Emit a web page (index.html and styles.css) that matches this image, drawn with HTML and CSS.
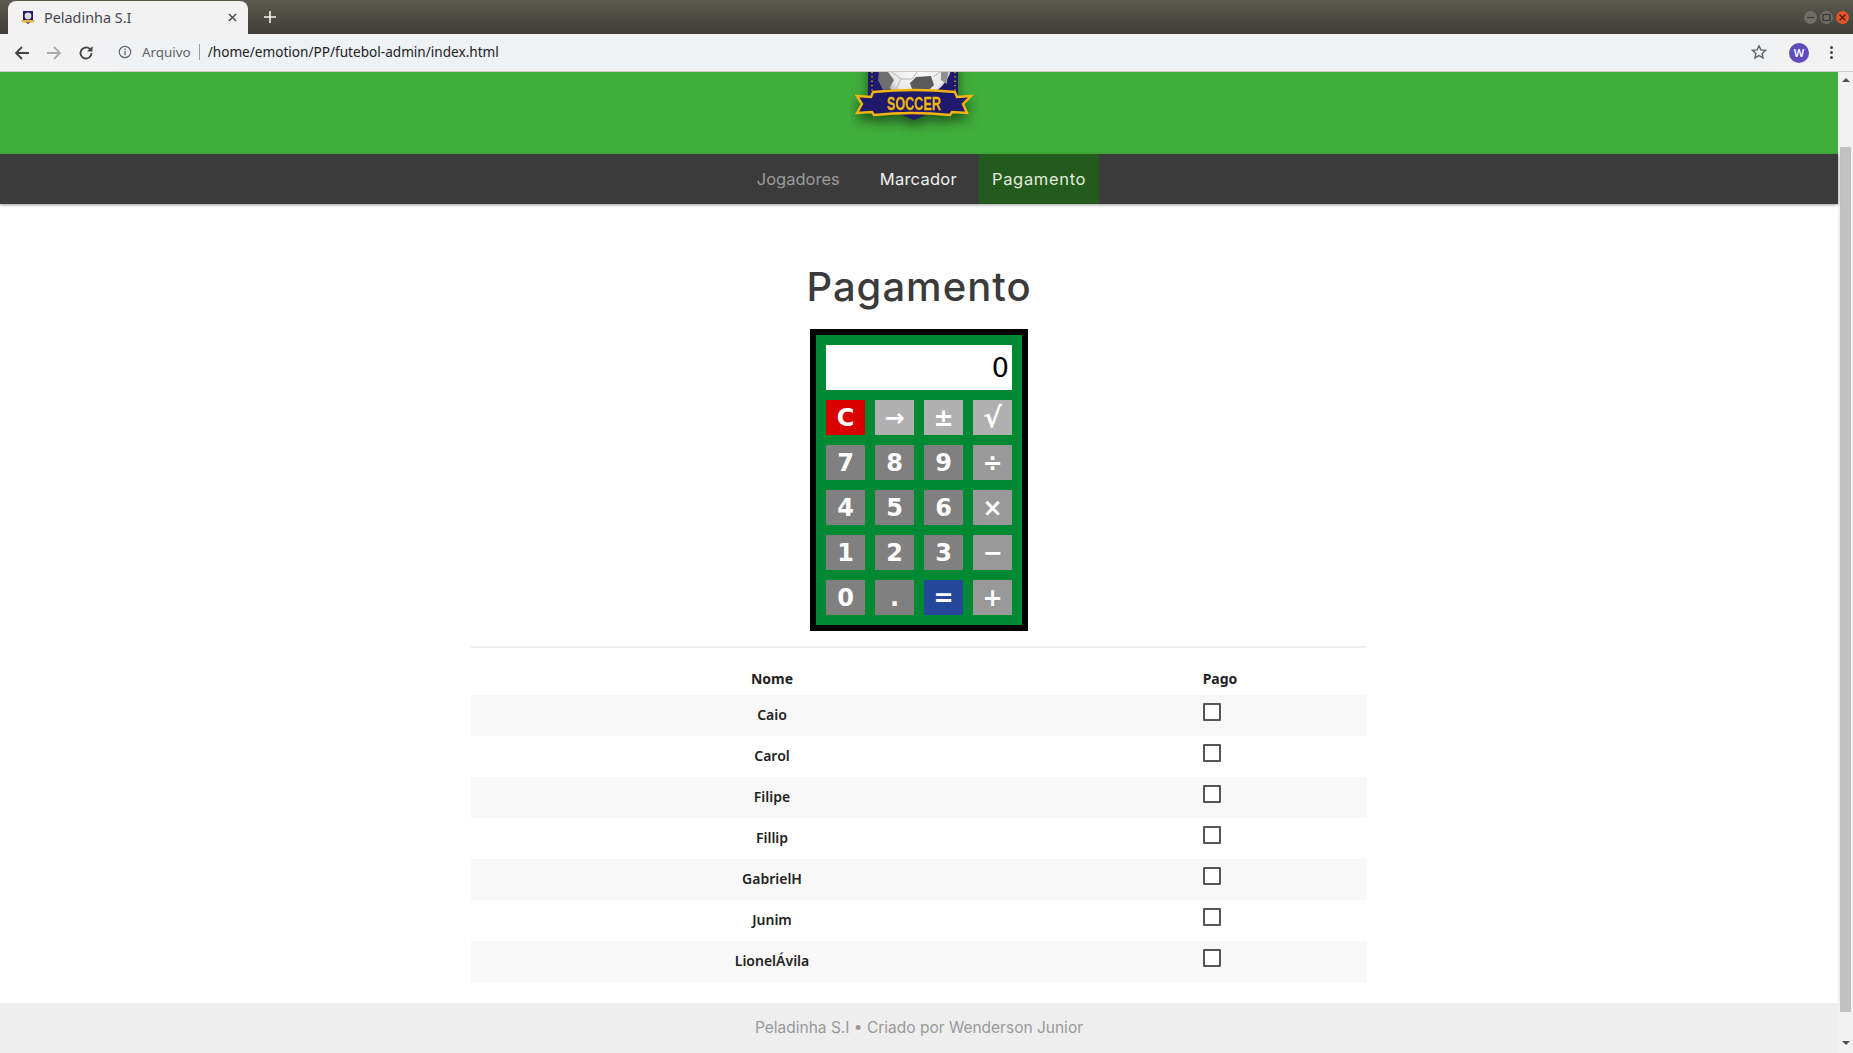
FILE: index.html
```html
<!DOCTYPE html>
<html>
<head>
  <meta charset="utf-8">
  <title>Peladinha S.I</title>
  <link rel="stylesheet" href="styles.css">
</head>
<body>
  <div class="tabstrip">
    <div class="tab">
      <svg class="favicon" viewBox="0 0 16 16">
        <path fill="#1f1a6b" d="M3 1h10v9l-5 4-5-4z"/>
        <circle cx="8" cy="6" r="3.4" fill="#ddd"/>
        <path fill="#e3b23c" d="M1 10h14l-1.500 2.500h-11z"/>
      </svg>
      <span class="tab-title">Peladinha S.I</span>
      <span class="tab-close">
        <svg viewBox="0 0 10 10"><path d="M1 1l8 8M9 1l-8 8" stroke="#444" stroke-width="1.500" fill="none"/></svg>
      </span>
    </div>
    <svg class="newtab" viewBox="0 0 12 12"><path d="M6 0v12M0 6h12" stroke="#f2f2f2" stroke-width="1.600" fill="none"/></svg>
    <div class="winbtns">
      <span class="winbtn"><svg viewBox="0 0 13 13"><path d="M3 6.500h7" stroke="#333" stroke-width="1.200"/></svg></span>
      <span class="winbtn"><svg viewBox="0 0 13 13"><rect x="3" y="3.500" width="7" height="6" fill="none" stroke="#333" stroke-width="1.200"/></svg></span>
      <span class="winbtn close"><svg viewBox="0 0 13 13"><path d="M3.500 3.500l6 6M9.500 3.500l-6 6" stroke="#4a1a08" stroke-width="1.300"/></svg></span>
    </div>
  </div>

  <div class="toolbar">
    <svg class="tool" viewBox="0 0 16 16"><path d="M15 8H2M8 2L2 8l6 6" fill="none" stroke="#444" stroke-width="1.800"/></svg>
    <svg class="tool" viewBox="0 0 16 16"><path d="M1 8h13M8 2l6 6-6 6" fill="none" stroke="#aaa" stroke-width="1.800"/></svg>
    <svg class="tool" viewBox="0 0 16 16"><path d="M13.500 8a5.500 5.500 0 1 1-1.600-3.900" fill="none" stroke="#444" stroke-width="1.800"/><path d="M14.500 1v5.500H9z" fill="#444"/></svg>
    <div class="omnibox">
      <svg class="info" viewBox="0 0 14 14"><circle cx="7" cy="7" r="5.700" fill="none" stroke="#5f6368" stroke-width="1.200"/><path d="M7 6v4.200M7 3.600v1.300" stroke="#5f6368" stroke-width="1.300"/></svg>
      <span class="scheme">Arquivo</span>
      <span class="sep"></span>
      <span class="url">/home/emotion/PP/futebol-admin/index.html</span>
      <svg class="star" viewBox="0 0 16 16"><path d="M8 1.800l1.900 4.100 4.500.5-3.300 3 .9 4.400L8 11.600l-4 2.200.9-4.400-3.300-3 4.500-.5z" fill="none" stroke="#5f6368" stroke-width="1.400"/></svg>
    </div>
    <span class="avatar">W</span>
    <span class="kebab"><i></i><i></i><i></i></span>
  </div>

  <div class="viewport">
    <div class="page">
      <header class="banner">
        <svg class="logo" viewBox="850 72 130 70">
          <defs>
            <radialGradient id="ball" cx="0.55" cy="0.6" r="0.55">
              <stop offset="0" stop-color="#fff"/>
              <stop offset="0.65" stop-color="#e8e8e8"/>
              <stop offset="1" stop-color="#8a8a8a"/>
            </radialGradient>
          </defs>
          <g class="logo-art">
            <path fill="#1f1a6b" d="M868 60h90v41l-44 19-46-19z"/>
            <path d="M872 72v22M955 72v22" stroke="#f5b50f" stroke-width="1.300" stroke-dasharray="1.300 3"/>
            <circle cx="914.500" cy="60" r="38" fill="url(#ball)"/>
            <path fill="#5a5a5a" d="M916 77l15-1 3 9-8 8-13-1-3-9z"/>
            <path fill="#6e6e6e" d="M879 72h9l6 8-5 9-6 1-5-10z"/>
            <path fill="#909090" d="M941 72h7l-1 12-6-4z"/>
            <path d="M892 72l9 7h11l5-7M901 79l-6 12M933 77l7-5" stroke="#b5b5b5" stroke-width="1" fill="none"/>
            <path fill="#1f1a6b" stroke="#f5b50f" stroke-width="2.400" stroke-linejoin="miter" d="M857 96l14 1 2-5q41-4 82 0l2 5 14-1-8 8 4 9-15-1-2 3q-38-4-76 0l-2-3-15 1 5-9z"/>
            <text x="887" y="109.500" class="logo-text" textLength="54" lengthAdjust="spacingAndGlyphs">SOCCER</text>
          </g>
        </svg>
      </header>

      <nav class="mainnav">
        <a class="navitem muted">Jogadores</a>
        <a class="navitem tight">Marcador</a>
        <a class="navitem active">Pagamento</a>
      </nav>

      <main class="content">
        <h1>Pagamento</h1>
        <div class="calc">
          <div class="display">0</div>
          <button class="key clear">C</button>
          <button class="key light">→</button>
          <button class="key light">±</button>
          <button class="key light root">√</button>
          <button class="key">7</button>
          <button class="key">8</button>
          <button class="key">9</button>
          <button class="key op">÷</button>
          <button class="key">4</button>
          <button class="key">5</button>
          <button class="key">6</button>
          <button class="key op">×</button>
          <button class="key">1</button>
          <button class="key">2</button>
          <button class="key">3</button>
          <button class="key op">−</button>
          <button class="key">0</button>
          <button class="key">.</button>
          <button class="key equals">=</button>
          <button class="key op">+</button>
        </div>
        <hr>
        <table class="players">
          <thead>
            <tr><th class="name">Nome</th><th class="paid">Pago</th></tr>
          </thead>
          <tbody>
            <tr><td>Caio</td><td class="check"><span class="box"></span></td></tr>
            <tr><td>Carol</td><td class="check"><span class="box"></span></td></tr>
            <tr><td>Filipe</td><td class="check"><span class="box"></span></td></tr>
            <tr><td>Fillip</td><td class="check"><span class="box"></span></td></tr>
            <tr><td>GabrielH</td><td class="check"><span class="box"></span></td></tr>
            <tr><td>Junim</td><td class="check"><span class="box"></span></td></tr>
            <tr><td>LionelÁvila</td><td class="check"><span class="box"></span></td></tr>
          </tbody>
        </table>
      </main>

      <footer class="pagefoot">Peladinha S.I • Criado por Wenderson Junior</footer>
    </div>

    <div class="scrollbar">
      <span class="arrow up"></span>
      <span class="thumb"></span>
      <span class="arrow down"></span>
    </div>
  </div>
</body>
</html>
```

FILE: styles.css
```css
* { box-sizing: border-box; }

body {
  margin: 0;
  height: 1053px;
  overflow: hidden;
  display: flex;
  flex-direction: column;
  font-family: 'Noto Sans', sans-serif;
  background: #fff;
}

/* browser chrome */
.tabstrip {
  height: 34px;
  display: flex;
  align-items: flex-end;
  padding-left: 8px;
  background: linear-gradient(#5c5a4d, #3f3e38);
}
.tab {
  width: 240px;
  height: 33px;
  display: flex;
  align-items: center;
  padding: 0 11px 0 12px;
  background: #f2f2f2;
  border-radius: 8px 8px 0 0;
}
.favicon { width: 16px; height: 16px; margin-right: 8px; }
.tab-title { flex: 1; font-size: 14.400px; color: #45474d; }
.tab-close svg { display: block; width: 9px; height: 9px; }
.newtab { width: 12px; height: 12px; margin: 0 0 11px 16px; }
.winbtns { margin-left: auto; display: flex; gap: 3px; padding: 0 4px 10px 0; align-self: flex-end; }
.winbtn { width: 13px; height: 13px; border-radius: 50%; background: #6f6e66; }
.winbtn svg { display: block; }
.winbtn.close { background: #e4552a; }

.toolbar {
  height: 38px;
  display: flex;
  align-items: center;
  padding: 0 0 0 14px;
  background: #f2f2f2;
  border-bottom: 1px solid #c9c9c9;
}
.tool { width: 16px; height: 16px; margin-right: 16px; }
.omnibox {
  width: 1675px;
  height: 29px;
  margin-left: -7px;
  display: flex;
  align-items: center;
  padding: 0 11px 2px 15px;
  background: #eff2f5;
  border-radius: 15px;
  font-size: 13.600px;
}
.info { width: 14px; height: 14px; margin-right: 10px; }
.scheme { font-size: 13.400px; color: #5f6368; }
.sep { width: 1px; height: 16px; margin: 0 8px 0 8px; background: #9a9ea3; }
.url { color: #202124; }
.star { width: 16px; height: 16px; margin-left: auto; }
.avatar {
  width: 20px;
  height: 20px;
  margin-left: 11px;
  border-radius: 50%;
  background: #5f4bbb;
  color: #fff;
  font-size: 11px;
  font-weight: 600;
  line-height: 20px;
  text-align: center;
}
.kebab { display: flex; flex-direction: column; gap: 2px; margin-left: 21px; }
.kebab i { width: 3px; height: 3px; border-radius: 50%; background: #444; }

/* page */
.viewport { flex: 1; min-height: 0; display: flex; }
.page { flex: 1; min-width: 0; display: flex; flex-direction: column; }

.scrollbar {
  width: 15px;
  display: flex;
  flex-direction: column;
  align-items: center;
  background: #f1f1f1;
}
.arrow { width: 0; height: 0; border-left: 4px solid transparent; border-right: 4px solid transparent; }
.arrow.up { margin-top: 6px; border-bottom: 4px solid #505050; }
.arrow.down { margin-top: 29px; border-top: 4px solid #505050; }
.thumb { width: 11px; height: 865px; margin-top: 65px; background: #c1c1c1; }

.banner {
  height: 82px;
  display: flex;
  justify-content: center;
  background: #40ae3b;
}
.logo { width: 130px; height: 70px; margin-right: 8px; }
.logo-art { filter: drop-shadow(0 6px 6px rgba(0, 0, 0, .5)); }
.logo-text { font-family: 'Liberation Sans', sans-serif; font-weight: 700; font-size: 18px; fill: #f5b50f; stroke: #f5b50f; stroke-width: .3px; }

.mainnav {
  height: 50px;
  display: flex;
  justify-content: center;
  padding-left: 5px;
  background: #3b3b3b;
  box-shadow: 0 1px 3px rgba(0, 0, 0, .4);
  font-family: Inter, sans-serif;
  font-size: 16.500px;
  letter-spacing: .68px;
  position: relative;
}
.navitem { padding: 0 13px; line-height: 51px; color: #f1f1f1; }
.navitem.muted { color: #9a9a9a; margin-right: 14px; letter-spacing: 0; }
.navitem.tight { letter-spacing: .25px; }
.navitem.active { background: #235a1d; color: #e4ecdf; margin-left: 9px; }

.content { flex: 1; display: flex; flex-direction: column; align-items: center; }

h1 {
  margin: 60px 0 19px;
  font-family: Inter, sans-serif;
  font-size: 40px;
  font-weight: 500;
  line-height: 46px;
  letter-spacing: 1px;
  color: #3b3b3b;
}

.calc {
  width: 218px;
  height: 302px;
  display: grid;
  grid-template-columns: repeat(4, 39px);
  grid-template-rows: 45px repeat(5, 35px);
  gap: 10px;
  padding: 10px;
  background: #008933;
  border: 6px solid #000;
}
.display {
  grid-column: 1 / -1;
  padding-right: 3px;
  background: #fff;
  color: #000;
  font-family: 'DejaVu Sans', sans-serif;
  font-size: 27px;
  line-height: 46px;
  text-align: right;
}
.key {
  padding: 0;
  border: 0;
  background: #808080;
  color: #fff;
  font-family: 'DejaVu Sans', sans-serif;
  font-size: 24px;
  font-weight: 700;
}
.key.light { background: #b0b0b0; }
.key.root { font-size: 28px; }
.key.op { background: #999; }
.key.clear { background: #d90000; }
.key.equals { background: #25489b; }

hr {
  width: 896px;
  height: 2px;
  margin: 15px 0 0;
  border: 0;
  background: #eee;
}

.players {
  width: 896px;
  border-collapse: collapse;
  font-size: 14px;
  color: #222;
}
.players th { height: 47px; padding: 0 0 7px; vertical-align: bottom; font-weight: 700; }
.players th.name { width: 602px; }
.players td { height: 41px; padding: 0 0 2px; text-align: center; font-weight: 600; }
.players tbody tr:nth-child(odd) { background: #f8f8f8; }
.players td.check { text-align: left; vertical-align: top; padding: 8px 0 0 130px; }
.box { display: block; width: 18px; height: 18px; border: 2px solid #555; background: #fff; border-radius: 1px; }

.pagefoot {
  height: 50px;
  margin-top: 21px;
  background: #eee;
  color: #999;
  font-family: Inter, sans-serif;
  font-size: 15.500px;
  line-height: 50px;
  text-align: center;
}
```
